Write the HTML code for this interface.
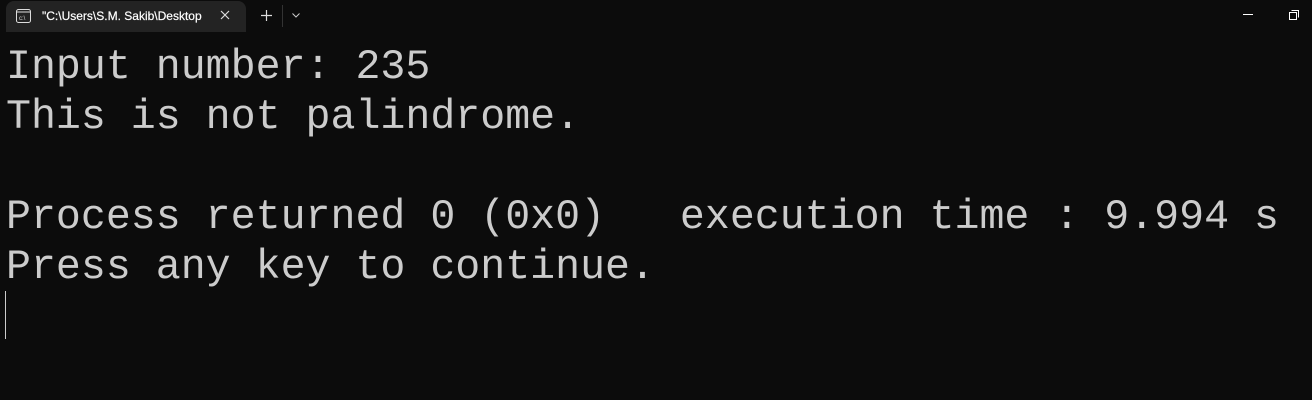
<!DOCTYPE html>
<html><head><meta charset="utf-8"><style>
html,body{margin:0;padding:0;width:1312px;height:400px;background:#0c0c0c;overflow:hidden}
.tab{position:absolute;left:6px;top:1px;width:240px;height:31px;background:#232323;border-radius:8px 8px 0 0}
.tt{position:absolute;left:42px;top:9px;font:12px "Liberation Sans",sans-serif;color:#fff;-webkit-text-stroke:0.2px #fff}
.term{position:absolute;left:6px;top:43px;font:41.6px/50px "Liberation Mono",monospace;color:#cccccc;white-space:pre}
.cur{position:absolute;left:5px;top:291px;width:1px;height:48px;background:#ccc}
</style></head><body>
<div class="tab"></div>
<svg style="position:absolute;left:16px;top:9px" width="15" height="14" viewBox="0 0 15 14"><rect x="0.5" y="0.5" width="14" height="13" rx="2" fill="none" stroke="#ddd"/><line x1="0.5" y1="3" x2="14.5" y2="3" stroke="#ddd"/><text x="3" y="11" font-size="6" fill="#ddd" font-family="Liberation Sans">c:\</text></svg>
<div class="tt">"C:\Users\S.M. Sakib\Desktop</div>
<svg style="position:absolute;left:220px;top:10px" width="10" height="10"><path d="M1 1L9 9M9 1L1 9" stroke="#ddd" stroke-width="1.2"/></svg>
<svg style="position:absolute;left:261px;top:10px" width="11" height="11"><path d="M5.5 0V11M0 5.5H11" stroke="#ddd" stroke-width="1.2"/></svg>
<div style="position:absolute;left:282px;top:5px;width:1px;height:22px;background:#333"></div>
<svg style="position:absolute;left:292px;top:13px" width="8" height="5"><path d="M0.5 0.5L4 4L7.5 0.5" stroke="#ccc" fill="none"/></svg>
<div style="position:absolute;left:1243px;top:14px;width:10px;height:1px;background:#fff"></div>
<svg style="position:absolute;left:1289px;top:10px" width="10" height="10"><rect x="0.5" y="2.5" width="7" height="7" fill="none" stroke="#fff"/><path d="M2.5 0.5H9.5V7.5" fill="none" stroke="#fff"/></svg>
<div class="term">Input number: 235
This is not palindrome.

Process returned 0 (0x0)   execution time : 9.994 s
Press any key to continue.</div>
<div class="cur"></div>
</body></html>
